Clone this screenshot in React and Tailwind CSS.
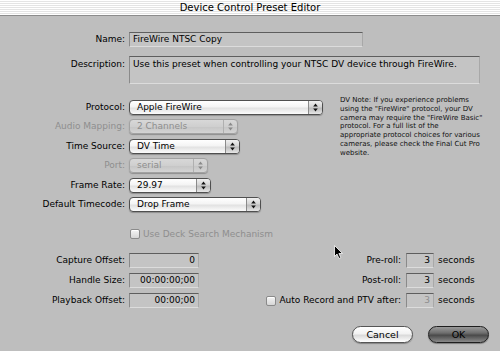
import React from "react";

const Arrows = ({ disabled }) => (
  <svg width="5" height="9" viewBox="0 0 5 9" className="block">
    <path d="M2.5 0.5 L4.8 3.5 L0.2 3.5 Z" fill={disabled ? "#8a8a8a" : "#111"} />
    <path d="M2.5 8.5 L4.8 5.5 L0.2 5.5 Z" fill={disabled ? "#8a8a8a" : "#111"} />
  </svg>
);

const Popup = ({ width, text, disabled }) => (
  <div
    style={{ width }}
    className={
      "h-[15px] rounded-[4px] border flex items-stretch overflow-hidden shadow-[0_1px_1px_rgba(0,0,0,0.25)] " +
      (disabled
        ? "border-[#a2a2a2] bg-[linear-gradient(to_bottom,#d8d8d8_0%,#cfcfcf_50%,#c6c6c6_55%,#d4d4d4_100%)] text-[#8e8e8e]"
        : "border-[#4f4f4f] bg-[linear-gradient(to_bottom,#ffffff_0%,#f4f4f4_45%,#e2e2e2_55%,#fbfbfb_100%)] text-black")
    }
  >
    <div className="flex-1 pl-[7px] flex items-center leading-none text-[9px] whitespace-nowrap">{text}</div>
    <div
      className={
        "w-[14px] flex items-center justify-center border-l " +
        (disabled
          ? "border-[#b0b0b0]"
          : "border-[#8a8a8a] bg-[linear-gradient(to_bottom,#f0f0f0_0%,#d4d4d4_45%,#bcbcbc_55%,#e6e6e6_100%)]")
      }
    >
      <Arrows disabled={disabled} />
    </div>
  </div>
);

const Field = ({ width, height = 15, children, align = "left", disabled }) => (
  <div
    style={{ width, height }}
    className={
      "bg-[#c4c4c4] border border-t-[#5e5e5e] border-l-[#8a8a8a] border-r-[#a8a8a8] border-b-[#dcdcdc] text-[9px] leading-[13px] px-[3px] whitespace-nowrap " +
      (align === "right" ? "text-right " : "") +
      (disabled ? "text-[#8e8e8e]" : "text-black")
    }
  >
    {children}
  </div>
);

const Check = () => (
  <div className="w-[10px] h-[10px] rounded-[2px] border border-[#8a8a8a] bg-[linear-gradient(to_bottom,#f4f4f4,#d6d6d6)] shadow-[inset_0_1px_0_#fff]" />
);

const Row = ({ label, children, disabled }) => (
  <div className="flex items-center">
    <div className={"w-[125px] text-right text-[9px] leading-none whitespace-nowrap " + (disabled ? "text-[#8e8e8e]" : "text-black")}>
      {label}
    </div>
    <div className="ml-[4px]">{children}</div>
  </div>
);

const RightRow = ({ label, value, disabled, check }) => (
  <div className="flex items-center justify-end h-[15px]">
    {check && <div className="mr-[3px]"><Check /></div>}
    <div className="text-[9px] leading-none text-black whitespace-nowrap">{label}</div>
    <div className="ml-[5px]">
      <Field width={28} align="right" disabled={disabled}>{value}</Field>
    </div>
    <div className="ml-[4px] w-[36px] text-[9px] leading-none text-black">seconds</div>
  </div>
);

export default function App() {
  return (
    <div className="relative w-[500px] h-[351px] overflow-hidden bg-[#bebebe] font-['DejaVu_Sans',sans-serif]">
      {/* Title bar */}
      <div className="h-[16px] border-b border-[#8c8c8c] bg-[repeating-linear-gradient(to_bottom,#ffffff_0px,#ffffff_1px,#e4e4e4_1px,#e4e4e4_2px)] flex items-center justify-center">
        <span className="text-[10px] leading-none text-black">Device Control Preset Editor</span>
      </div>

      {/* Name */}
      <div className="mt-[16px]">
        <Row label="Name:">
          <Field width={234}>FireWire NTSC Copy</Field>
        </Row>
      </div>

      {/* Description */}
      <div className="mt-[9px] flex items-start">
        <div className="w-[125px] text-right text-[9px] leading-[14px] pt-[1px] text-black">Description:</div>
        <div className="ml-[4px]">
          <Field width={351} height={28}>
            <div className="pt-[1px]">Use this preset when controlling your NTSC DV device through FireWire.</div>
          </Field>
        </div>
      </div>

      {/* Popups + note */}
      <div className="mt-[12px] flex items-start">
        <div className="w-[330px] pt-[3.7px] flex flex-col gap-[4.5px]">
          <Row label="Protocol:"><Popup width={194} text="Apple FireWire" /></Row>
          <Row label="Audio Mapping:" disabled><Popup width={109} text="2 Channels" disabled /></Row>
          <Row label="Time Source:"><Popup width={111} text="DV Time" /></Row>
          <Row label="Port:" disabled><Popup width={79} text="serial" disabled /></Row>
          <Row label="Frame Rate:"><Popup width={82} text="29.97" /></Row>
          <Row label="Default Timecode:"><Popup width={132} text="Drop Frame" /></Row>
        </div>
        <div className="ml-[10px] text-[7px] leading-[8.8px] text-[#111] whitespace-nowrap">
          DV Note: If you experience problems<br />
          using the "FireWire" protocol, your DV<br />
          camera may require the "FireWire Basic"<br />
          protocol. For a full list of the<br />
          appropriate protocol choices for various<br />
          cameras, please check the Final Cut Pro<br />
          website.
        </div>
      </div>

      {/* Deck search */}
      <div className="mt-[17px] ml-[130px] flex items-center">
        <Check />
        <span className="ml-[3px] text-[9px] leading-none text-[#8e8e8e]">Use Deck Search Mechanism</span>
      </div>

      {/* Offsets */}
      <div className="mt-[14px] flex items-start">
        <div className="flex flex-col gap-[5px]">
          <Row label="Capture Offset:"><Field width={70} align="right">0</Field></Row>
          <Row label="Handle Size:"><Field width={70} align="right">00:00:00;00</Field></Row>
          <Row label="Playback Offset:"><Field width={70} align="right">00:00;00</Field></Row>
        </div>
        <div className="flex-1 pr-[26px] flex flex-col gap-[5px]">
          <RightRow label="Pre-roll:" value="3" />
          <RightRow label="Post-roll:" value="3" />
          <RightRow label="Auto Record and PTV after:" value="3" disabled check />
        </div>
      </div>

      {/* Buttons */}
      <div className="mt-[18px] pr-[11px] flex justify-end gap-[15px]">
        <button className="w-[61px] h-[17px] rounded-full border border-[#555] bg-[linear-gradient(to_bottom,#ffffff_0%,#f2f2f2_45%,#dadada_55%,#ffffff_100%)] shadow-[0_1px_1px_rgba(0,0,0,0.3)] text-[9.5px] leading-none text-black">
          Cancel
        </button>
        <button className="w-[61px] h-[17px] rounded-full border border-[#1e1e1e] bg-[linear-gradient(to_bottom,#9a9a9a_0%,#6e6e6e_40%,#4a4a4a_55%,#8a8a8a_100%)] shadow-[0_1px_1px_rgba(0,0,0,0.35)] text-[9.5px] leading-none text-black">
          OK
        </button>
      </div>

      {/* Cursor */}
      <svg className="absolute left-[334px] top-[245px]" width="10" height="15" viewBox="0 0 10 15">
        <path d="M0.5 0.5 L0.5 11.5 L3 9 L5 13.5 L6.8 12.7 L4.9 8.5 L8.5 8.5 Z" fill="#000" stroke="#fff" strokeWidth="0.8" />
      </svg>
    </div>
  );
}
